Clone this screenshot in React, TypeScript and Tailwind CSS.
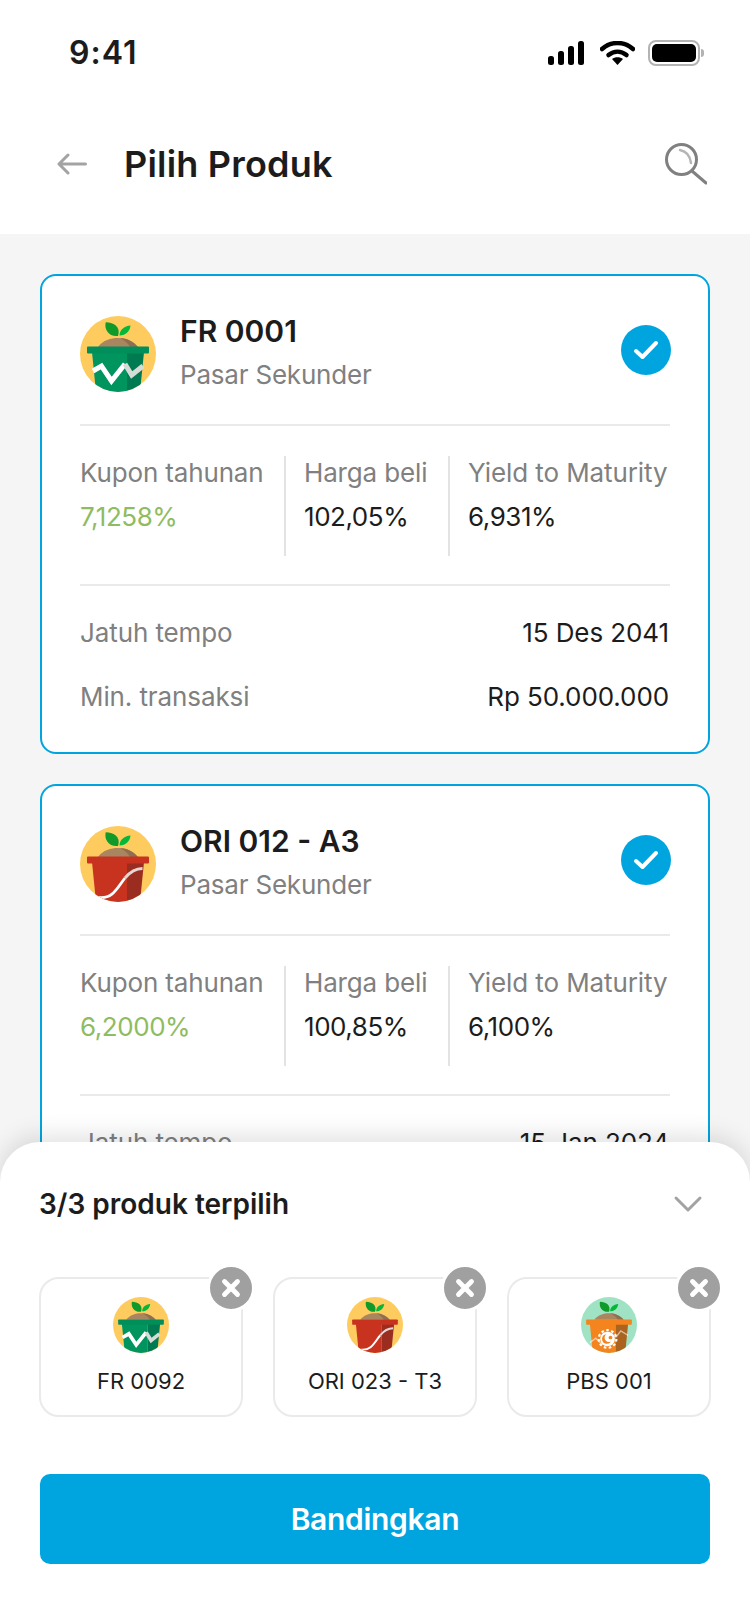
import { X } from 'lucide-react';

type PotKind = 'green' | 'red' | 'orange';

const potColors = {
  green: { bg: '#fecb5f', rim: '#008f5a', body: '#00945f', dark: '#007a50' },
  red: { bg: '#fecb5f', rim: '#c8331f', body: '#c8331f', dark: '#9b2d20' },
  orange: { bg: '#a0e3c4', rim: '#f3841e', body: '#f3841e', dark: '#ab6320' },
};

function PotIcon({ kind, size }: { kind: PotKind; size: number }) {
  const c = potColors[kind];
  const clipId = `clip-${kind}-${size}`;
  return (
    <svg width={size} height={size} viewBox="0 0 76 76" className="shrink-0">
      <defs>
        <clipPath id={clipId}>
          <circle cx="38" cy="38" r="38" />
        </clipPath>
      </defs>
      <circle cx="38" cy="38" r="38" fill={c.bg} />
      <g clipPath={`url(#${clipId})`}>
        <path d="M18 31C23 24 31 22 38 22C46 22 53 25 58 31Z" fill="#a98560" />
        <path d="M40 22C47 22 54 26 58 31H50C48 27 44 24 40 22Z" fill="#8f6f52" />
        <path d="M38 20C29 21 24 14 25.700 6.300C34 6.500 41 11 38 20Z" fill="#0f9a2a" />
        <path d="M39.500 19.500C39.500 14 44 10 50.500 9.500C50 15 46 19.500 39.500 19.500Z" fill="#05b83a" />
        <path d="M12 36H47V76H16Z" fill={c.body} />
        <path d="M47 36H64L60 76H47Z" fill={c.dark} />
        <rect x="7" y="30.500" width="62" height="7" rx="1" fill={c.rim} />
        {kind === 'green' && (
          <>
            <path d="M13 55L21.500 50L31.500 65L45 48" fill="none" stroke="#fff" strokeWidth="5" />
            <path d="M45 48L51.700 59L63 50" fill="none" stroke="#d5dcd8" strokeWidth="5" />
          </>
        )}
        {kind === 'red' && (
          <>
            <path d="M19 71.500C33 73 37 62 45 52" fill="none" stroke="#fff" strokeWidth="2.800" />
            <path d="M45 52C50 46 55 42.500 62.500 42.500" fill="none" stroke="#e6d6d2" strokeWidth="2.800" />
          </>
        )}
        {kind === 'orange' && (
          <>
            <path d="M12 62L20 56L28 64L36 52L48 54L54 46L64 52" fill="none" stroke="#ffffff" strokeOpacity="0.55" strokeWidth="2" />
            <circle cx="36" cy="57" r="10" fill="#fff" />
            <circle cx="36" cy="57" r="12" fill="none" stroke="#fff" strokeWidth="3" strokeDasharray="3.500 3.300" />
            <circle cx="35" cy="57" r="6.500" fill={c.body} />
            <circle cx="38" cy="55" r="6" fill="#fff" />
            <circle cx="40" cy="55" r="2.500" fill={c.body} />
          </>
        )}
      </g>
    </svg>
  );
}

function StatusBar() {
  return (
    <div className="h-[104px] flex items-center justify-between pl-[69px] pr-[46px] pt-[1px]">
      <span className="text-[32px] leading-none font-semibold tracking-[1px] text-[#1c1c1c]">9:41</span>
      <div className="flex items-center">
        <svg width="37" height="24" viewBox="0 0 37 24" fill="#000">
          <rect x="0" y="15" width="6" height="9" rx="2.500" />
          <rect x="10" y="10" width="6" height="14" rx="2.500" />
          <rect x="20" y="5" width="6" height="19" rx="2.500" />
          <rect x="30" y="0" width="6" height="24" rx="2.500" />
        </svg>
        <svg width="35" height="24" viewBox="0 0 35 24" className="ml-[15px]">
          <path d="M2 8C11 0 24 0 33 8" fill="none" stroke="#000" strokeWidth="4.500" strokeLinecap="round" />
          <path d="M8.500 14C14 9.500 21 9.500 26.500 14" fill="none" stroke="#000" strokeWidth="4.500" strokeLinecap="round" />
          <path d="M12 18C15 15.500 20 15.500 23 18L17.500 24Z" fill="#000" />
        </svg>
        <div className="flex items-center ml-[13px]">
          <div className="w-[52px] h-[26px] rounded-[8px] border-2 border-[#b3b3b3] p-[2px]">
            <div className="w-full h-full rounded-[5px] bg-black" />
          </div>
          <div className="w-[3px] h-[8px] rounded-r-full bg-[#b3b3b3] ml-[1px]" />
        </div>
      </div>
    </div>
  );
}

function Header() {
  return (
    <div className="h-[130px] bg-white flex items-center pl-[57px] pr-[43px] pb-[10px] justify-between">
      <div className="flex items-center gap-[37px]">
        <svg width="30" height="22" viewBox="0 0 30 22" fill="none" stroke="#a3a3a3" strokeWidth="3" strokeLinecap="round" strokeLinejoin="round">
          <path d="M28.500 11H2M11 2L2 11L11 20" />
        </svg>
        <h1 className="text-[36px] leading-none font-semibold tracking-[0.2px] text-[#1c1c1c]">Pilih Produk</h1>
      </div>
      <svg width="42" height="42" viewBox="0 0 42 42" fill="none" stroke="#808080" strokeLinecap="round">
        <circle cx="16.500" cy="16.500" r="15" strokeWidth="3" />
        <path d="M27 28L41 40" strokeWidth="3" />
        <path d="M15 7C20 8 25 12 26 20" stroke="#b5b5b5" strokeWidth="2.500" />
      </svg>
    </div>
  );
}

type Product = {
  name: string;
  kind: PotKind;
  coupon: string;
  price: string;
  ytm: string;
  rows: [string, string][];
};

const products: Product[] = [
  {
    name: 'FR 0001',
    kind: 'green',
    coupon: '7,1258%',
    price: '102,05%',
    ytm: '6,931%',
    rows: [
      ['Jatuh tempo', '15 Des 2041'],
      ['Min. transaksi', 'Rp 50.000.000'],
    ],
  },
  {
    name: 'ORI 012 - A3',
    kind: 'red',
    coupon: '6,2000%',
    price: '100,85%',
    ytm: '6,100%',
    rows: [['Jatuh tempo', '15 Jan 2024']],
  },
];

function ProductCard({ product }: { product: Product }) {
  return (
    <div className="bg-white border-2 border-[#00a5df] rounded-[16px] px-[38px] pt-[39px] pb-[38px] shrink-0">
      <div className="flex items-center justify-between h-[78px]">
        <div className="flex items-center gap-[24px]">
          <PotIcon kind={product.kind} size={76} />
          <div className="mb-[5px]">
            <p className="text-[30px] leading-[36px] font-semibold text-[#1c1c1c]">{product.name}</p>
            <p className="text-[26px] leading-[32px] mt-[10px] tracking-[-0.2px] text-[#808080]">Pasar Sekunder</p>
          </div>
        </div>
        <div className="w-[50px] h-[50px] -mr-[1px] mb-[9px] rounded-full bg-[#00a5df] flex items-center justify-center">
          <svg width="26" height="20" viewBox="0 0 26 20" fill="none" stroke="#fff" strokeWidth="4" strokeLinecap="round" strokeLinejoin="round">
            <path d="M3 11L9.500 17L23 3" />
          </svg>
        </div>
      </div>

      <div className="h-[2px] bg-[#eaeaea] mt-[31px]" />

      <div className="flex mt-[30px] h-[100px]">
        <div className="w-[206px] border-r-2 border-[#e3e3e3]">
          <p className="text-[26px] leading-[34px] tracking-[-0.15px] text-[#808080]">Kupon tahunan</p>
          <p className="text-[26px] leading-[34px] mt-[10px] tracking-[-0.45px] text-[#8fbc5f]">{product.coupon}</p>
        </div>
        <div className="w-[164px] pl-[18px] border-r-2 border-[#e3e3e3]">
          <p className="text-[26px] leading-[34px] tracking-[-0.15px] text-[#808080]">Harga beli</p>
          <p className="text-[26px] leading-[34px] mt-[10px] tracking-[-0.45px] text-[#1c1c1c]">{product.price}</p>
        </div>
        <div className="pl-[18px]">
          <p className="text-[26px] leading-[34px] tracking-[-0.1px] text-[#808080] whitespace-nowrap">Yield to Maturity</p>
          <p className="text-[26px] leading-[34px] mt-[10px] tracking-[-0.45px] text-[#1c1c1c]">{product.ytm}</p>
        </div>
      </div>

      <div className="h-[2px] bg-[#eaeaea] mt-[28px]" />

      <div className="flex flex-col gap-[30px] mt-[30px]">
        {product.rows.map(([label, value]) => (
          <div key={label} className="flex items-center justify-between">
            <span className="text-[26px] leading-[34px] tracking-[-0.1px] text-[#808080]">{label}</span>
            <span className="text-[26px] leading-[34px] tracking-[-0.1px] mr-[1px] text-[#1c1c1c]">{value}</span>
          </div>
        ))}
      </div>
    </div>
  );
}

const selected: { name: string; kind: PotKind }[] = [
  { name: 'FR 0092', kind: 'green' },
  { name: 'ORI 023 - T3', kind: 'red' },
  { name: 'PBS 001', kind: 'orange' },
];

function SelectedTile({ name, kind }: { name: string; kind: PotKind }) {
  return (
    <div className="relative h-[140px] border-2 border-[#eaeaea] rounded-[20px] flex flex-col items-center pt-[18px]">
      <PotIcon kind={kind} size={56} />
      <span className="text-[22px] leading-[28px] font-normal text-[#1c1c1c] mt-[14px]">{name}</span>
      <div className="absolute -top-[15px] -right-[14px] w-[42px] h-[42px] rounded-full bg-[#a0a0a0] border-[3px] border-white box-content flex items-center justify-center">
        <X size={26} strokeWidth={4.5} color="#fff" />
      </div>
    </div>
  );
}

function BottomSheet() {
  return (
    <div className="absolute left-0 right-0 bottom-0 h-[482px] bg-white rounded-t-[40px] shadow-[0_-6px_24px_rgba(0,0,0,0.12)] px-[39px]">
      <div className="flex items-center justify-between pt-[41px] pr-[8px] h-[83px]">
        <span className="text-[28px] leading-[40px] font-semibold text-[#1c1c1c]">3/3 produk terpilih</span>
        <svg width="30" height="18" viewBox="0 0 30 18" fill="none" stroke="#a3a3a3" strokeWidth="3" strokeLinecap="round" strokeLinejoin="round">
          <path d="M3 3L15 15L27 3" />
        </svg>
      </div>
      <div className="grid grid-cols-3 gap-[30px] mt-[52px]">
        {selected.map(p => (
          <SelectedTile key={p.name} name={p.name} kind={p.kind} />
        ))}
      </div>
      <button className="w-[670px] h-[90px] ml-[1px] mt-[57px] rounded-[10px] bg-[#00a5df] text-white text-[30px] font-semibold tracking-[-0.3px]">
        Bandingkan
      </button>
    </div>
  );
}

export default function App() {
  return (
    <div
      className="relative w-[750px] h-[1624px] overflow-hidden bg-white flex flex-col"
      style={{ fontFamily: 'Inter, "Noto Sans", sans-serif' }}
    >
      <StatusBar />
      <Header />
      <div className="flex-1 bg-[#f5f5f5] px-[40px] pt-[40px] flex flex-col gap-[30px] overflow-hidden">
        {products.map(p => (
          <ProductCard key={p.name} product={p} />
        ))}
      </div>
      <BottomSheet />
    </div>
  );
}
